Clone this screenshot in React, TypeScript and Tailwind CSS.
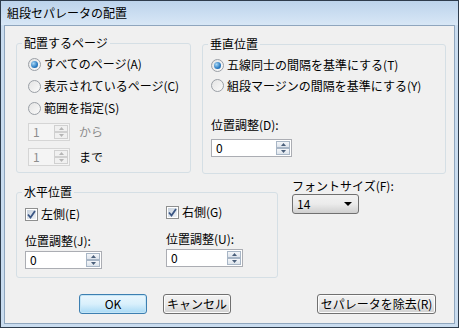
import React from "react";

const FONT = { fontFamily: '"Noto Sans CJK JP", "Noto Sans", sans-serif' };

function Radio({ checked, label }: { checked?: boolean; label: string }) {
  return (
    <div className="flex items-center h-full">
      <div className="w-[13px] h-[13px] rounded-full border border-[#9a9fa6] bg-gradient-to-br from-[#e4e4e4] to-[#fafafa] flex items-center justify-center shrink-0">
        {checked && (
          <div className="w-[7px] h-[7px] rounded-full bg-[radial-gradient(circle_at_35%_35%,#a9d8f5,#2a7bc2_60%,#1c5a95)]" />
        )}
      </div>
      <span className="ml-[3px] text-[12px] leading-none text-black whitespace-nowrap">{label}</span>
    </div>
  );
}

function Check({ label }: { label: string }) {
  return (
    <div className="flex items-center h-full">
      <div className="w-[13px] h-[13px] border border-[#8e8f8f] bg-white p-[1px] shrink-0">
        <div className="w-full h-full bg-gradient-to-br from-[#c8d2de] to-[#f0f3f6] flex items-center justify-center">
          <svg width="9" height="9" viewBox="0 0 9 9">
            <path d="M1 4.5 L3.5 7.5 L8 1" fill="none" stroke="#3a5684" strokeWidth="1.8" />
          </svg>
        </div>
      </div>
      <span className="ml-[3px] text-[12px] leading-none text-black whitespace-nowrap">{label}</span>
    </div>
  );
}

function Spin({ value, width, disabled }: { value: string; width: number; disabled?: boolean }) {
  return (
    <div
      className={`h-[18px] flex border ${disabled ? "border-[#d5d5d5] bg-[#f4f4f4]" : "border-[#abadb3] bg-white"}`}
      style={{ width }}
    >
      <div className={`flex-1 flex items-center pl-[4px] text-[12px] leading-none ${disabled ? "text-[#8d8d8d]" : "text-black"}`}>
        {value}
      </div>
      <div className="w-[16px] flex flex-col p-[1px]">
        <div className={`flex-1 flex items-center justify-center border ${disabled ? "border-[#d0d0d0] bg-[#f0f0f0]" : "border-[#a8b6c6] bg-gradient-to-b from-[#f4f6f9] to-[#dde4ec]"}`}>
          <svg width="5" height="3" viewBox="0 0 5 3"><path d="M0 3 L2.5 0 L5 3Z" fill={disabled ? "#b5b5b5" : "#4a5f7a"} /></svg>
        </div>
        <div className={`flex-1 flex items-center justify-center border ${disabled ? "border-[#d0d0d0] bg-[#f0f0f0]" : "border-[#a8b6c6] bg-gradient-to-b from-[#f4f6f9] to-[#dde4ec]"}`}>
          <svg width="5" height="3" viewBox="0 0 5 3"><path d="M0 0 L2.5 3 L5 0Z" fill={disabled ? "#b5b5b5" : "#4a5f7a"} /></svg>
        </div>
      </div>
    </div>
  );
}

function Group({ label, className, children }: { label: string; className: string; children: React.ReactNode }) {
  return (
    <div className={`relative border border-[#d5dfe5] rounded-[3px] ${className}`}>
      <div className="absolute -top-[9px] left-[5px] px-[2px] bg-[#f0f0f0] text-[12px] leading-[16px] text-black">{label}</div>
      {children}
    </div>
  );
}

function Button({ label, width, focused }: { label: string; width: number; focused?: boolean }) {
  return (
    <div
      className={`h-[20px] rounded-[3px] border flex items-center justify-center text-[12px] leading-none text-black ${
        focused
          ? "border-[#3c7fb1] bg-gradient-to-b from-[#eaf6fd] via-[#d9f0fc] to-[#a7d9f5] shadow-[inset_0_0_0_1px_#c4e5f6]"
          : "border-[#707070] bg-gradient-to-b from-[#f2f2f2] via-[#ebebeb] to-[#cfcfcf] shadow-[inset_0_0_0_1px_#fcfcfc]"
      }`}
      style={{ width }}
    >
      {label}
    </div>
  );
}

export default function App() {
  return (
    <div style={FONT} className="w-[459px] h-[328px] flex flex-col border border-[#2e3c4c] bg-[#c9dcef] overflow-hidden">
      <div className="h-[24px] shrink-0 flex items-center pl-[6px] bg-gradient-to-b from-[#bcd3eb] to-[#d8e7f6] text-[12px] leading-none text-black">
        組段セパレータの配置
      </div>
      <div className="flex-1 mx-[3px] mb-[3px] border border-[#8fa6be] bg-[#f0f0f0] flex flex-col">
        <div className="flex pt-[17px] pl-[11px]">
          <Group label="配置するページ" className="w-[175px] h-[130px] pl-[11px] pt-[9px]">
            <div className="h-[22px]"><Radio checked label="すべてのページ(A)" /></div>
            <div className="h-[22px]"><Radio label="表示されているページ(C)" /></div>
            <div className="h-[22px]"><Radio label="範囲を指定(S)" /></div>
            <div className="mt-[4px] flex items-center">
              <Spin value="1" width={42} disabled />
              <span className="ml-[9px] text-[12px] leading-none text-[#8d8d8d]">から</span>
            </div>
            <div className="mt-[7px] flex items-center">
              <Spin value="1" width={42} disabled />
              <span className="ml-[9px] text-[12px] leading-none text-black">まで</span>
            </div>
          </Group>
          <Group label="垂直位置" className="ml-[11px] mt-[1px] w-[244px] h-[130px] pl-[8px] pt-[10px]">
            <div className="h-[20px]"><Radio checked label="五線同士の間隔を基準にする(T)" /></div>
            <div className="h-[21px]"><Radio label="組段マージンの間隔を基準にする(Y)" /></div>
            <div className="mt-[21px] h-[16px] flex items-center text-[12px] leading-none">位置調整(D):</div>
            <div className="mt-[6px]"><Spin value="0" width={81} /></div>
          </Group>
        </div>
        <div className="flex pt-[18px] pl-[11px]">
          <Group label="水平位置" className="w-[262px] h-[86px] pl-[8px] pt-[11px] flex">
            <div className="w-[141px]">
              <div className="h-[20px]"><Check label="左側(E)" /></div>
              <div className="mt-[9px] h-[16px] flex items-center text-[12px] leading-none">位置調整(J):</div>
              <div className="mt-[2px]"><Spin value="0" width={77} /></div>
            </div>
            <div>
              <div className="h-[20px] -mt-[2px] mb-[2px]"><Check label="右側(G)" /></div>
              <div className="mt-[9px] h-[16px] flex items-center text-[12px] leading-none">位置調整(U):</div>
              <div className="mt-[2px]"><Spin value="0" width={77} /></div>
            </div>
          </Group>
          <div className="ml-[14px] -mt-[14px]">
            <div className="h-[16px] flex items-center text-[12px] leading-none">フォントサイズ(F):</div>
            <div className="w-[67px] h-[20px] rounded-[3px] border border-[#707070] bg-gradient-to-b from-[#f2f2f2] via-[#ebebeb] to-[#cfcfcf] flex items-center pl-[4px] pr-[6px] text-[12px] leading-none">
              <span className="flex-1">14</span>
              <svg width="8" height="4" viewBox="0 0 8 4"><path d="M0 0 L8 0 L4 4Z" fill="#000" /></svg>
            </div>
          </div>
        </div>
        <div className="flex pt-[16px] pl-[74px]">
          <Button label="OK" width={68} focused />
          <div className="ml-[16px]"><Button label="キャンセル" width={68} /></div>
          <div className="ml-[86px]"><Button label="セパレータを除去(R)" width={119} /></div>
        </div>
      </div>
    </div>
  );
}
